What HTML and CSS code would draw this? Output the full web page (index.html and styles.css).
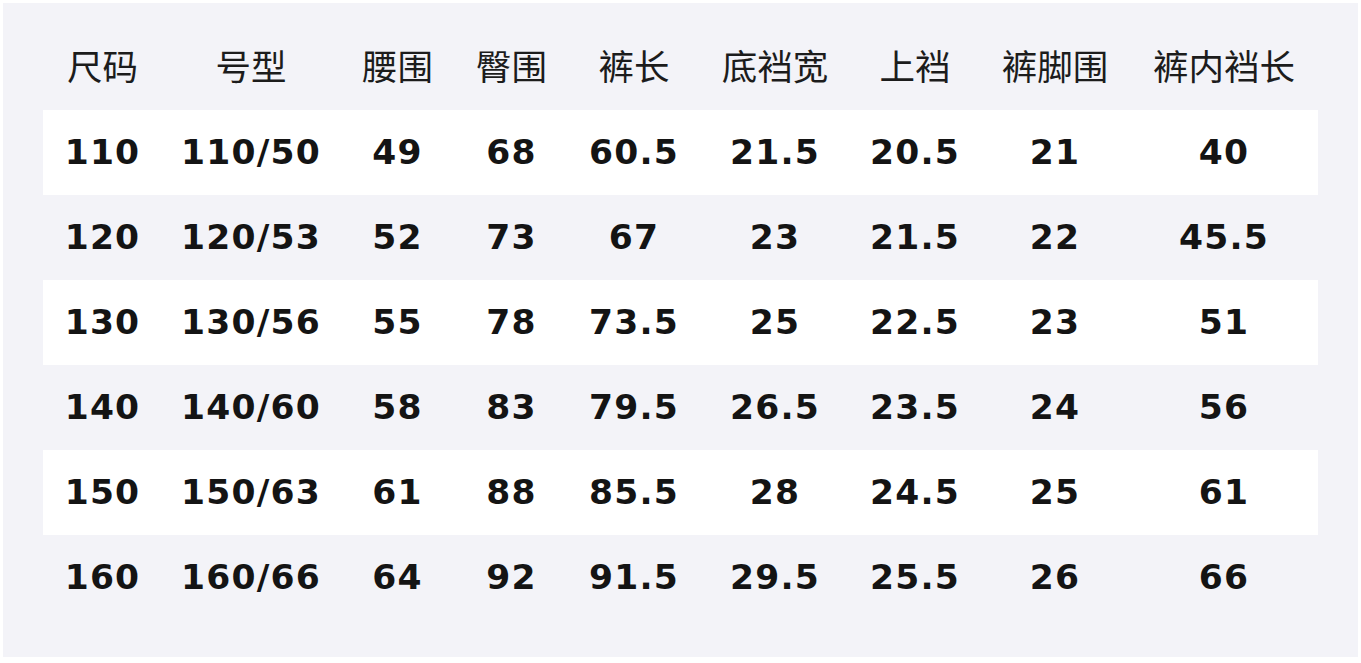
FILE: index.html
```html
<!DOCTYPE html>
<html lang="zh">
<head>
<meta charset="utf-8">
<title>尺码表</title>
<link rel="stylesheet" href="styles.css">
</head>
<body>
<div class="panel">
  <div class="row head">
    <div>尺码</div><div>号型</div><div>腰围</div><div>臀围</div><div>裤长</div><div>底裆宽</div><div>上裆</div><div>裤脚围</div><div>裤内裆长</div>
  </div>
  <div class="row odd">
    <div>110</div><div>110/50</div><div>49</div><div>68</div><div>60.5</div><div>21.5</div><div>20.5</div><div>21</div><div>40</div>
  </div>
  <div class="row">
    <div>120</div><div>120/53</div><div>52</div><div>73</div><div>67</div><div>23</div><div>21.5</div><div>22</div><div>45.5</div>
  </div>
  <div class="row odd">
    <div>130</div><div>130/56</div><div>55</div><div>78</div><div>73.5</div><div>25</div><div>22.5</div><div>23</div><div>51</div>
  </div>
  <div class="row">
    <div>140</div><div>140/60</div><div>58</div><div>83</div><div>79.5</div><div>26.5</div><div>23.5</div><div>24</div><div>56</div>
  </div>
  <div class="row odd">
    <div>150</div><div>150/63</div><div>61</div><div>88</div><div>85.5</div><div>28</div><div>24.5</div><div>25</div><div>61</div>
  </div>
  <div class="row">
    <div>160</div><div>160/66</div><div>64</div><div>92</div><div>91.5</div><div>29.5</div><div>25.5</div><div>26</div><div>66</div>
  </div>
</div>
</body>
</html>
```

FILE: styles.css
```css
html, body {
  margin: 0;
  background: #ffffff;
}
body {
  padding: 3px 3px 6px 3px;
}
.panel {
  background: #f3f3f8;
  height: 654px;
  box-sizing: border-box;
  padding: 22px 40px 37px 40px;
}
.row {
  display: grid;
  grid-template-columns: 119px 178px 115px 113px 132px 150px 130px 150px 188px;
  height: 85px;
  box-sizing: border-box;
  padding-bottom: 1px;
  align-items: center;
  text-align: center;
  font-family: "DejaVu Sans", "Noto Sans CJK SC", sans-serif;
  font-weight: bold;
  font-size: 34.5px;
  letter-spacing: 1.2px;
  color: #141414;
}
.row.odd {
  background: #ffffff;
}
.row.head {
  padding-bottom: 7px;
  font-family: "Noto Sans CJK SC", sans-serif;
  font-weight: normal;
  font-size: 35.5px;
  letter-spacing: 0;
  color: #1c1c1c;
}
```
